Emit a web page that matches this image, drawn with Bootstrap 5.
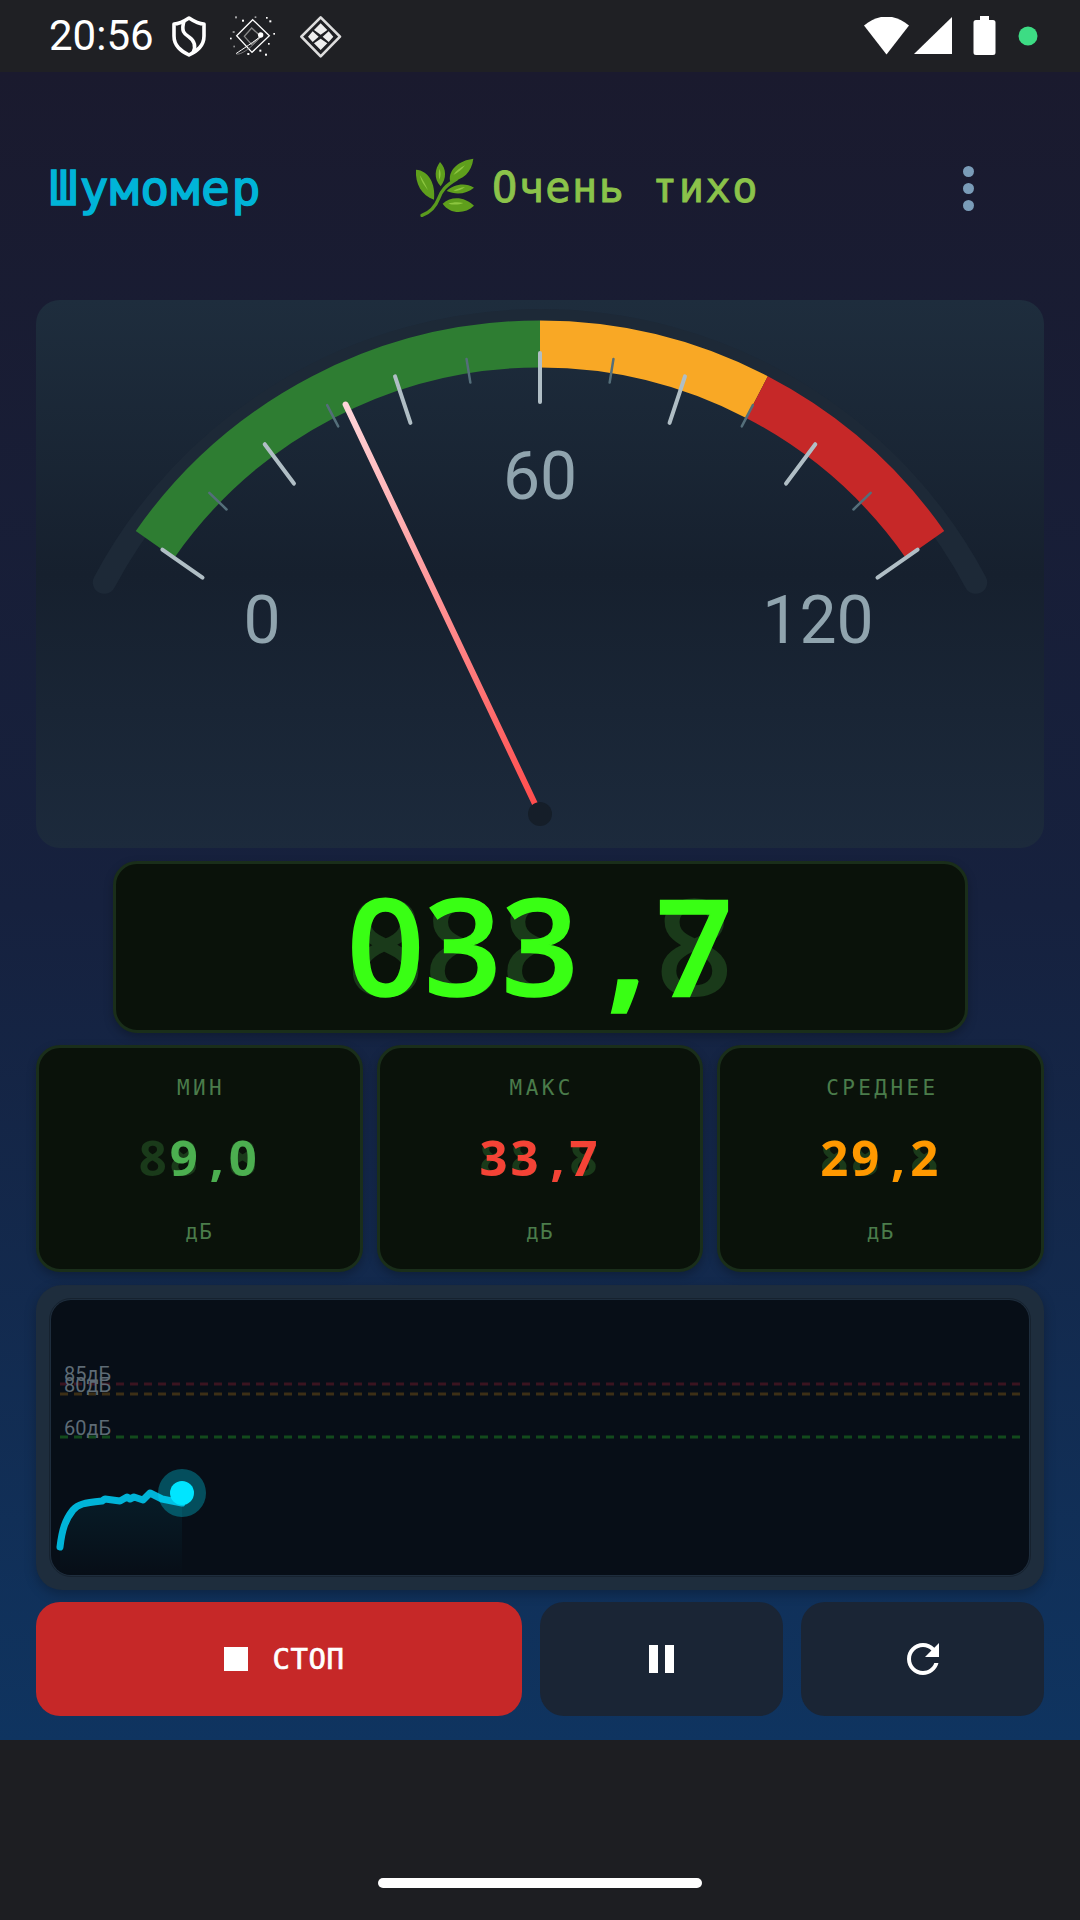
<!DOCTYPE html>
<html lang="ru">
<head>
<meta charset="utf-8">
<title>Шумомер</title>
<link href="https://cdn.jsdelivr.net/npm/bootstrap@5.3.0/dist/css/bootstrap.min.css" rel="stylesheet">
<style>
html,body{margin:0;width:1080px;height:1920px;background:#1d1e22;overflow:hidden}
body{font-family:"DejaVu Sans Mono",monospace}
svg{display:block;flex:none}
.sb{height:72px;background:#1f2024;padding:0 42px 0 49px;color:#fff}
.sb-time{font:400 42px/72px Roboto,sans-serif;margin-right:18px}
.ic-b{margin-left:21px}
.app-main{height:1668px;padding:0 36px;background:linear-gradient(180deg,#1a1a2e 0%,#16213e 50%,#0f3460 100%)}
.app-head{height:228px;padding:4px 0 0 13px}
.app-title{width:366px;font-size:48px;letter-spacing:1.5px;color:#00b4d8;-webkit-text-stroke:1.5px #00b4d8;line-height:1}
.app-status{font-size:42px;letter-spacing:1.4px;color:#8bc34a;-webkit-text-stroke:.9px #8bc34a;line-height:1;gap:17px;white-space:pre}
.dots{margin-left:auto;margin-right:70px;gap:6px}
.dots i{display:block;width:11px;height:11px;border-radius:50%;background:#7a9cb8}
.gauge-box{height:548px;border-radius:24px;background:linear-gradient(180deg,#1e2d3d 0%,#16202e 50%,#1c2a3c 100%);overflow:hidden}
.lcd{background:#0a120a;border:3px solid #1a2e1a;border-radius:24px;box-shadow:0 4px 10px rgba(0,0,0,.25)}
.lcd-main{width:855px;height:172px;margin:13px auto 12px;font-family:"Open Sans",sans-serif;font-weight:600;font-size:135px;line-height:1;padding-bottom:5px}
.stack{display:grid}
.stack>*{grid-area:1/1}
.comma-cell{display:inline-block;width:.572em;text-align:center;font-weight:700;padding-left:.14em}
.ghost{color:#1a3a1a}
.lit{color:#39ff14;text-align:right;-webkit-text-stroke:1.5px #39ff14}
.stat-row{gap:14px;height:227px}
.stat-cell{flex:1 1 0;padding:25px 0 22px}
.stat-cap{font-size:21px;letter-spacing:3.4px;margin-right:-3.4px;color:#4a7c4a;line-height:30px}
.stat-val{font-family:"Open Sans",sans-serif;font-weight:700;font-size:49px;letter-spacing:3px;line-height:56px;margin-bottom:6px}
.stat-unit{font-size:21px;letter-spacing:1.4px;color:#4a7c4a;line-height:30px}
.c-min{color:#4caf50}.c-max{color:#f44336}.c-avg{color:#ff9800}
.chart-box{height:305px;margin-top:13px;padding:15px;background:#1e2d3d;border-radius:26px;box-shadow:0 4px 12px rgba(0,0,0,.25)}
.chart-in{height:275px;background:#070e17;border-radius:20px;overflow:hidden;outline:1px solid #16222f;outline-offset:1px}
.ctl{height:114px;margin-top:12px;gap:18px}
.ctl .btn{flex:1 1 0;border:0;border-radius:24px;background:#1a2535;padding:0;color:#fff}
.ctl .btn.go{flex:2 1 0;background:#c62828;font-size:29px;letter-spacing:.5px;-webkit-text-stroke:.7px #fff;gap:25px;line-height:1}
.ctl .btn.go svg{margin-left:10px}
.foot{height:180px;background:#1d1e22;padding-bottom:32px}
.pill{width:324px;height:10px;border-radius:5px;background:#fff}
.stick{font-family:Roboto,sans-serif}
</style>
</head>
<body>
<div class="sb d-flex align-items-center">
  <span class="sb-time">20:56</span>
  <svg width="34" height="42" viewBox="171 15 34 42"><path d="M188 18C182 22 178 24 173 24V36C173 46 180 51 188 55C196 51 203 46 203 36V24C198 24 194 22 188 18Z" fill="none" stroke="#fff" stroke-width="3.600" stroke-linejoin="round"/><path d="M183 21C180 31 183 34 188 37C194 41 195 47 192 53" fill="none" stroke="#fff" stroke-width="3.600"/></svg>
  <svg class="ms-4" width="47" height="47" viewBox="90 40 141 141"><path d="M158 60L208 108L156 158L110 108Z" fill="none" stroke="#fff" stroke-width="4"/><path d="M155 85L182 110L155 135L133 110Z" fill="none" stroke="#888" stroke-width="4"/><path d="M108 162C125 150 165 125 188 105" fill="none" stroke="#fff" stroke-width="3"/><path d="M108 162C120 170 160 140 188 105" fill="none" stroke="#aaa" stroke-width="2"/><circle cx="182" cy="106" r="8" fill="#fff"/><g fill="#fff"><rect x="105" y="50" width="6" height="6" opacity=".6"/><rect x="126" y="60" width="6" height="6"/><rect x="164" y="50" width="5" height="5" opacity=".6"/><rect x="198" y="52" width="5" height="5"/><rect x="208" y="62" width="6" height="6"/><rect x="98" y="94" width="6" height="6" opacity=".5"/><rect x="90" y="114" width="5" height="5"/><rect x="220" y="100" width="5" height="5"/><rect x="204" y="130" width="5" height="5"/><rect x="100" y="138" width="5" height="5" opacity=".5"/><rect x="178" y="150" width="6" height="6"/><rect x="142" y="160" width="6" height="6"/><rect x="195" y="162" width="6" height="6"/></g></svg>
  <svg class="ic-b" width="45" height="45" viewBox="290 40 135 135"><path d="M358 50L416 108L358 167L300 108Z" fill="none" stroke="#ddd" stroke-width="8" stroke-linejoin="round"/><path d="M358 68L378 88L358 102L338 88ZM334 92L352 108L334 124L320 108ZM382 92L396 108L382 124L364 108ZM338 128L358 114L378 128L358 148Z" fill="#eee"/></svg>
  <div class="d-flex align-items-center ms-auto">
    <svg width="46" height="38" viewBox="866 17 46 38"><path d="M866 25.500C880 13.500 897 13.500 911 25.500L888.500 54.500Z" fill="#fff"/></svg>
    <svg class="ms-1" width="39" height="38" viewBox="915 17 39 38"><path d="M953 17V54H915Z" fill="#fff"/></svg>
    <svg width="23" height="40" style="margin-left:20px" viewBox="974 16 23 40"><path d="M981 16H990V20H994A2.500 2.500 0 0 1 996.500 22.500V52.500A2.500 2.500 0 0 1 994 55H977A2.500 2.500 0 0 1 974.500 52.500V22.500A2.500 2.500 0 0 1 977 20H981Z" fill="#fff"/></svg>
    <svg width="20" height="20" style="margin-left:22px" viewBox="0 0 20 20"><circle cx="10" cy="10" r="9.500" fill="#3ddc84"/></svg>
  </div>
</div>
<main class="app-main">
  <header class="app-head d-flex align-items-center">
    <div class="app-title">Шумомер</div>
    <div class="app-status d-flex align-items-center">
      <svg width="60" height="62" viewBox="45 50 180 186"><path d="M66 225C92 216 106 200 116 174C124 152 136 136 170 116" fill="none" stroke="#5a9a1e" stroke-width="10" stroke-linecap="round"/><path d="M48 88C85 90 108 130 102 178C65 165 45 130 48 88ZM120 65C140 85 140 115 122 138C100 115 105 85 120 65ZM220 55C215 95 190 120 150 122C145 85 180 60 220 55ZM222 142C200 160 170 165 140 152C160 132 195 125 222 142ZM222 196C195 222 150 222 128 190C155 165 195 170 222 196Z" fill="#5f9f1c"/><path d="M60 105C68 118 78 135 84 150C74 136 62 122 60 105ZM118 85C116 96 116 105 118 118C124 104 122 94 118 85ZM195 75C180 82 168 92 160 104C174 96 186 88 195 75ZM195 140C182 142 170 146 160 152C174 152 186 148 195 140ZM190 188C172 184 158 186 145 190C160 194 176 194 190 188Z" fill="#8cc63f"/></svg>
      <span>Очень тихо</span>
    </div>
    <div class="dots d-flex flex-column"><i></i><i></i><i></i></div>
  </header>

  <section class="gauge-box">
    <svg width="1008" height="548" viewBox="36 300 1008 548">
      <defs><linearGradient id="ndl" gradientUnits="userSpaceOnUse" x1="345.600" y1="404.500" x2="535" y2="804"><stop offset="0" stop-color="#ffd6da"/><stop offset="1" stop-color="#ff4d4d"/></linearGradient></defs>
      <path d="M104.300 582.300A493.500 493.500 0 0 1 975.700 582.300" fill="none" stroke="#1d2937" stroke-width="23" stroke-linecap="round"/>
      <path d="M155 544.400A470 470 0 0 1 540 344" fill="none" stroke="#2e7d32" stroke-width="47"/>
      <path d="M540 344A470 470 0 0 1 757 397.100" fill="none" stroke="#f9a825" stroke-width="47"/>
      <path d="M757 397.100A470 470 0 0 1 925 544.400" fill="none" stroke="#c62828" stroke-width="47"/>
      <g stroke="#546e7a" stroke-width="2.500" stroke-linecap="round">
        <line x1="540" y1="377" x2="540" y2="353" transform="rotate(-45.830 540 814)"/>
        <line x1="540" y1="377" x2="540" y2="353" transform="rotate(-27.500 540 814)"/>
        <line x1="540" y1="377" x2="540" y2="353" transform="rotate(-9.170 540 814)"/>
        <line x1="540" y1="377" x2="540" y2="353" transform="rotate(9.170 540 814)"/>
        <line x1="540" y1="377" x2="540" y2="353" transform="rotate(27.500 540 814)"/>
        <line x1="540" y1="377" x2="540" y2="353" transform="rotate(45.830 540 814)"/>
      </g>
      <g stroke="#b0bec5" stroke-width="4" stroke-linecap="round">
        <line x1="540" y1="402" x2="540" y2="353" transform="rotate(-55 540 814)"/>
        <line x1="540" y1="402" x2="540" y2="353" transform="rotate(-36.670 540 814)"/>
        <line x1="540" y1="402" x2="540" y2="353" transform="rotate(-18.330 540 814)"/>
        <line x1="540" y1="402" x2="540" y2="353"/>
        <line x1="540" y1="402" x2="540" y2="353" transform="rotate(18.330 540 814)"/>
        <line x1="540" y1="402" x2="540" y2="353" transform="rotate(36.670 540 814)"/>
        <line x1="540" y1="402" x2="540" y2="353" transform="rotate(55 540 814)"/>
      </g>
      <g class="stick" fill="#90a4ae" font-size="66" text-anchor="middle">
        <text x="540" y="499">60</text>
        <text x="262" y="643">0</text>
        <text x="818" y="643">120</text>
      </g>
      <line x1="345.600" y1="404.500" x2="535" y2="804" stroke="url(#ndl)" stroke-width="6" stroke-linecap="round"/>
      <circle cx="540" cy="814" r="12" fill="#151e29"/>
    </svg>
  </section>

  <div class="lcd lcd-main d-flex align-items-center justify-content-center">
    <div class="stack">
      <span class="ghost">888<span class="comma-cell">,</span>8</span>
      <span class="lit">033<span class="comma-cell">,</span>7</span>
    </div>
  </div>

  <div class="stat-row d-flex">
    <div class="lcd stat-cell d-flex flex-column align-items-center justify-content-between">
      <div class="stat-cap">МИН</div>
      <div class="stat-val stack"><span class="ghost">88<span class="comma-cell">,</span>8</span><span class="c-min text-end">9<span class="comma-cell">,</span>0</span></div>
      <div class="stat-unit">дБ</div>
    </div>
    <div class="lcd stat-cell d-flex flex-column align-items-center justify-content-between">
      <div class="stat-cap">МАКС</div>
      <div class="stat-val stack"><span class="ghost">88<span class="comma-cell">,</span>8</span><span class="c-max text-end">33<span class="comma-cell">,</span>7</span></div>
      <div class="stat-unit">дБ</div>
    </div>
    <div class="lcd stat-cell d-flex flex-column align-items-center justify-content-between">
      <div class="stat-cap">СРЕДНЕЕ</div>
      <div class="stat-val stack"><span class="ghost">88<span class="comma-cell">,</span>8</span><span class="c-avg text-end">29<span class="comma-cell">,</span>2</span></div>
      <div class="stat-unit">дБ</div>
    </div>
  </div>

  <section class="chart-box">
    <div class="chart-in">
      <svg width="978" height="275" viewBox="51 1300 978 275">
        <defs><linearGradient id="fillg" x1="0" y1="0" x2="0" y2="1"><stop offset="0" stop-color="#00b4d8" stop-opacity=".09"/><stop offset="1" stop-color="#00b4d8" stop-opacity="0"/></linearGradient></defs>
        <path d="M60 1547C62 1530 65 1520 73 1510C78 1504 84 1503 102 1501L105 1499L120 1501L127 1497L130 1499L134 1497L143 1500L150 1493L162 1499L182 1503V1575H60Z" fill="url(#fillg)"/>
        <g stroke-width="3" stroke-dasharray="8 6" fill="none">
          <line x1="60" y1="1384" x2="1020" y2="1384" stroke="#3a1420"/>
          <line x1="60" y1="1394" x2="1020" y2="1394" stroke="#3c2f16"/>
          <line x1="60" y1="1437" x2="1020" y2="1437" stroke="#124a1c"/>
        </g>
        <g class="stick" font-size="20" fill="#5e6b75">
          <text x="64" y="1381">85дБ</text>
          <text x="64" y="1392">80дБ</text>
          <text x="64" y="1435">60дБ</text>
        </g>
        <path d="M60 1547C62 1530 65 1520 73 1510C78 1504 84 1503 102 1501L105 1499L120 1501L127 1497L130 1499L134 1497L143 1500L150 1493L162 1499L182 1503" fill="none" stroke="#00b4d8" stroke-width="7" stroke-linecap="round" stroke-linejoin="round"/>
        <circle cx="182" cy="1493" r="24" fill="#00e5ff" opacity=".3"/>
        <circle cx="182" cy="1493" r="12" fill="#00e5ff"/>
      </svg>
    </div>
  </section>

  <div class="ctl d-flex">
    <button class="btn go d-flex align-items-center justify-content-center" type="button">
      <svg width="24" height="24" viewBox="0 0 24 24"><rect width="24" height="24" fill="#fff"/></svg>
      <span>СТОП</span>
    </button>
    <button class="btn d-flex align-items-center justify-content-center" type="button" aria-label="Пауза">
      <svg width="25" height="28" viewBox="0 0 25 28"><rect width="9" height="28" fill="#fff"/><rect x="16" width="9" height="28" fill="#fff"/></svg>
    </button>
    <button class="btn d-flex align-items-center justify-content-center" type="button" aria-label="Сброс">
      <svg width="48" height="48" viewBox="0 0 24 24"><path fill="#fff" d="M17.650 6.350C16.200 4.900 14.210 4 12 4c-4.420 0-7.990 3.580-7.990 8s3.570 8 7.990 8c3.730 0 6.840-2.550 7.730-6h-2.080c-.820 2.330-3.040 4-5.650 4-3.310 0-6-2.690-6-6s2.690-6 6-6c1.660 0 3.140.690 4.220 1.780L13 11h7V4l-2.350 2.350z"/></svg>
    </button>
  </div>
</main>
<footer class="foot d-flex justify-content-center align-items-end"><div class="pill"></div></footer>
</body>
</html>
